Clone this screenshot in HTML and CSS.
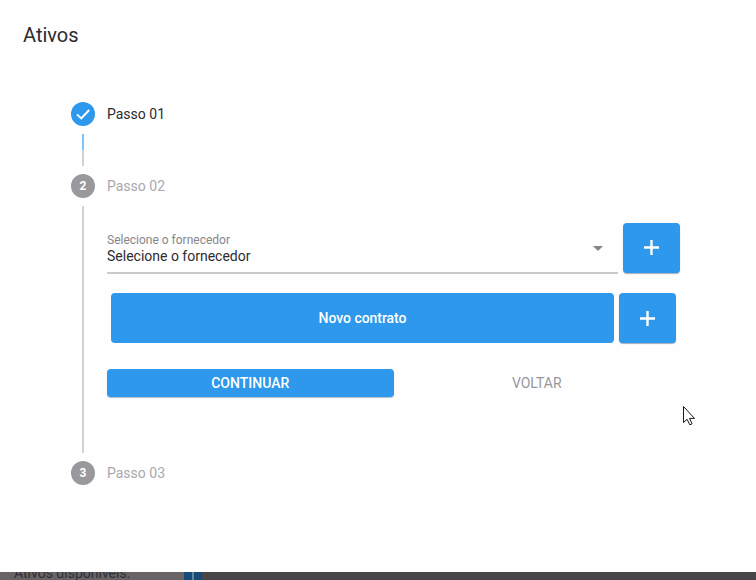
FILE: index.html
```html
<!DOCTYPE html>
<html lang="pt-BR">
<head>
<meta charset="utf-8">
<title>Ativos</title>
<link rel="stylesheet" href="styles.css">
</head>
<body>
<main class="dialog">
  <h1 class="title">Ativos</h1>
  <div class="stepper">
    <section class="step">
      <div class="rail">
        <span class="badge done"><svg width="24" height="24" viewBox="0 0 24 24"><path d="M6 12.4 10.2 16.4 18.2 8" fill="none" stroke="#fff" stroke-width="2"/></svg></span>
        <span class="line active"></span>
      </div>
      <div class="body first"><h2 class="label current"><span>Passo 01</span></h2></div>
    </section>
    <section class="step">
      <div class="rail"><span class="badge">2</span><span class="line"></span></div>
      <div class="body second">
        <h2 class="label"><span>Passo 02</span></h2>
        <div class="row supplier">
          <div class="select">
            <div class="values">
              <span class="hint">Selecione o fornecedor</span>
              <span class="value">Selecione o fornecedor</span>
            </div>
            <svg class="arrow" width="10" height="5" viewBox="0 0 10 5"><path d="M0 0h10L5 5z" fill="#85848a"/></svg>
          </div>
          <button class="btn add"><svg width="15" height="15" viewBox="0 0 15 15"><path d="M7.5 0v15M0 7.5h15" stroke="#fff" stroke-width="2.4"/></svg></button>
        </div>
        <div class="row contract">
          <button class="btn wide"><span>Novo contrato</span></button>
          <button class="btn add"><svg width="15" height="15" viewBox="0 0 15 15"><path d="M7.5 0v15M0 7.5h15" stroke="#fff" stroke-width="2.4"/></svg></button>
        </div>
        <div class="row actions">
          <button class="btn next"><span>CONTINUAR</span></button>
          <button class="back"><span>VOLTAR</span></button>
        </div>
      </div>
    </section>
    <section class="step">
      <div class="rail"><span class="badge">3</span></div>
      <div class="body"><h2 class="label"><span>Passo 03</span></h2></div>
    </section>
  </div>
</main>
<footer class="backdrop"><span class="caption">Ativos disponíveis:</span><span class="mark"></span></footer>
<svg class="cursor" width="13" height="20" viewBox="0 0 13 20"><path d="M.5.5v16l3.6-3.2 2.7 5.5 2.3-1-2.6-5.4h5z" fill="#fff" stroke="#18181c"/></svg>
</body>
</html>
```
FILE: styles.css
```css
* { box-sizing: border-box; }
body {
  margin: 0;
  height: 580px;
  overflow: hidden;
  background: #474548;
  color: #2c2b2f;
  font-family: Roboto, sans-serif;
}
button { border: 0; padding: 0; font: inherit; }
h1, h2 { margin: 0; font-weight: 400; }
.dialog { height: 572px; padding: 23px 76px 0 71px; background: #fefefe; }
.title { margin-left: -48px; font-size: 20px; line-height: 24px; }
.stepper { margin-top: 55px; }
.step { display: flex; gap: 12px; }
.rail { display: flex; flex-direction: column; align-items: center; width: 24px; }
.badge {
  flex: none;
  width: 24px;
  height: 24px;
  border-radius: 50%;
  background: #99989d;
  color: #fff;
  font-size: 12px;
  font-weight: 700;
  line-height: 24px;
  text-align: center;
}
.badge svg { display: block; }
.done { background: #2d98ec; }
.line { flex: 1; width: 2px; margin: 8px 0; background: #d2d1d6; }
.line.active { background: linear-gradient(#7cc5fa 50%, #d2d1d6 50%); }
.body { flex: 1; }
.first { height: 72px; }
.second { height: 287px; }
.label { font-size: 14px; line-height: 24px; color: #aaa8af; }
.label.current { color: #2c2b2f; }
.row { display: flex; gap: 5px; }
.supplier { margin: 24px -4px 0 0; width: 573px; }
.select {
  display: flex;
  justify-content: space-between;
  flex: 1;
  height: 52px;
  padding: 10px 15px 0 0;
  border-bottom: 2px solid #cac9ce;
}
.values { display: flex; flex-direction: column; }
.hint { font-size: 12px; line-height: 16px; color: #87858b; }
.value { font-size: 14px; line-height: 17px; }
.arrow { margin-top: 14px; }
.btn {
  display: flex;
  align-items: center;
  justify-content: center;
  height: 50px;
  border-radius: 4px;
  background: #2d98ec;
  color: #fff;
  font-size: 14px;
  font-weight: 500;
}
.add { width: 57px; box-shadow: 0 1px 1px #a5abb8; }
.supplier .add { margin-top: .5px; }
.contract { width: 565px; margin: 19px 0 0 4px; }
.wide { flex: 1; }
.wide span { letter-spacing: -.05px; }
.actions { gap: 0; width: 573px; margin-top: 26px; }
.next { width: 286.5px; height: 28px; box-shadow: 0 1px 1px #b5bdca; }
.back { width: 286.5px; height: 28px; background: none; color: #99979e; font-size: 14px; }
.backdrop { display: flex; height: 8px; overflow: hidden; }
.caption {
  width: 184px;
  height: 8px;
  padding-left: 14px;
  background: #676366;
  color: #323034;
  font-size: 14px;
  line-height: 2px;
}
.mark { width: 18px; background: linear-gradient(90deg, #174a76 8px, #64859e 8px 10px, #174a76 10px); }
.cursor { position: absolute; left: 683px; top: 406px; }
```
